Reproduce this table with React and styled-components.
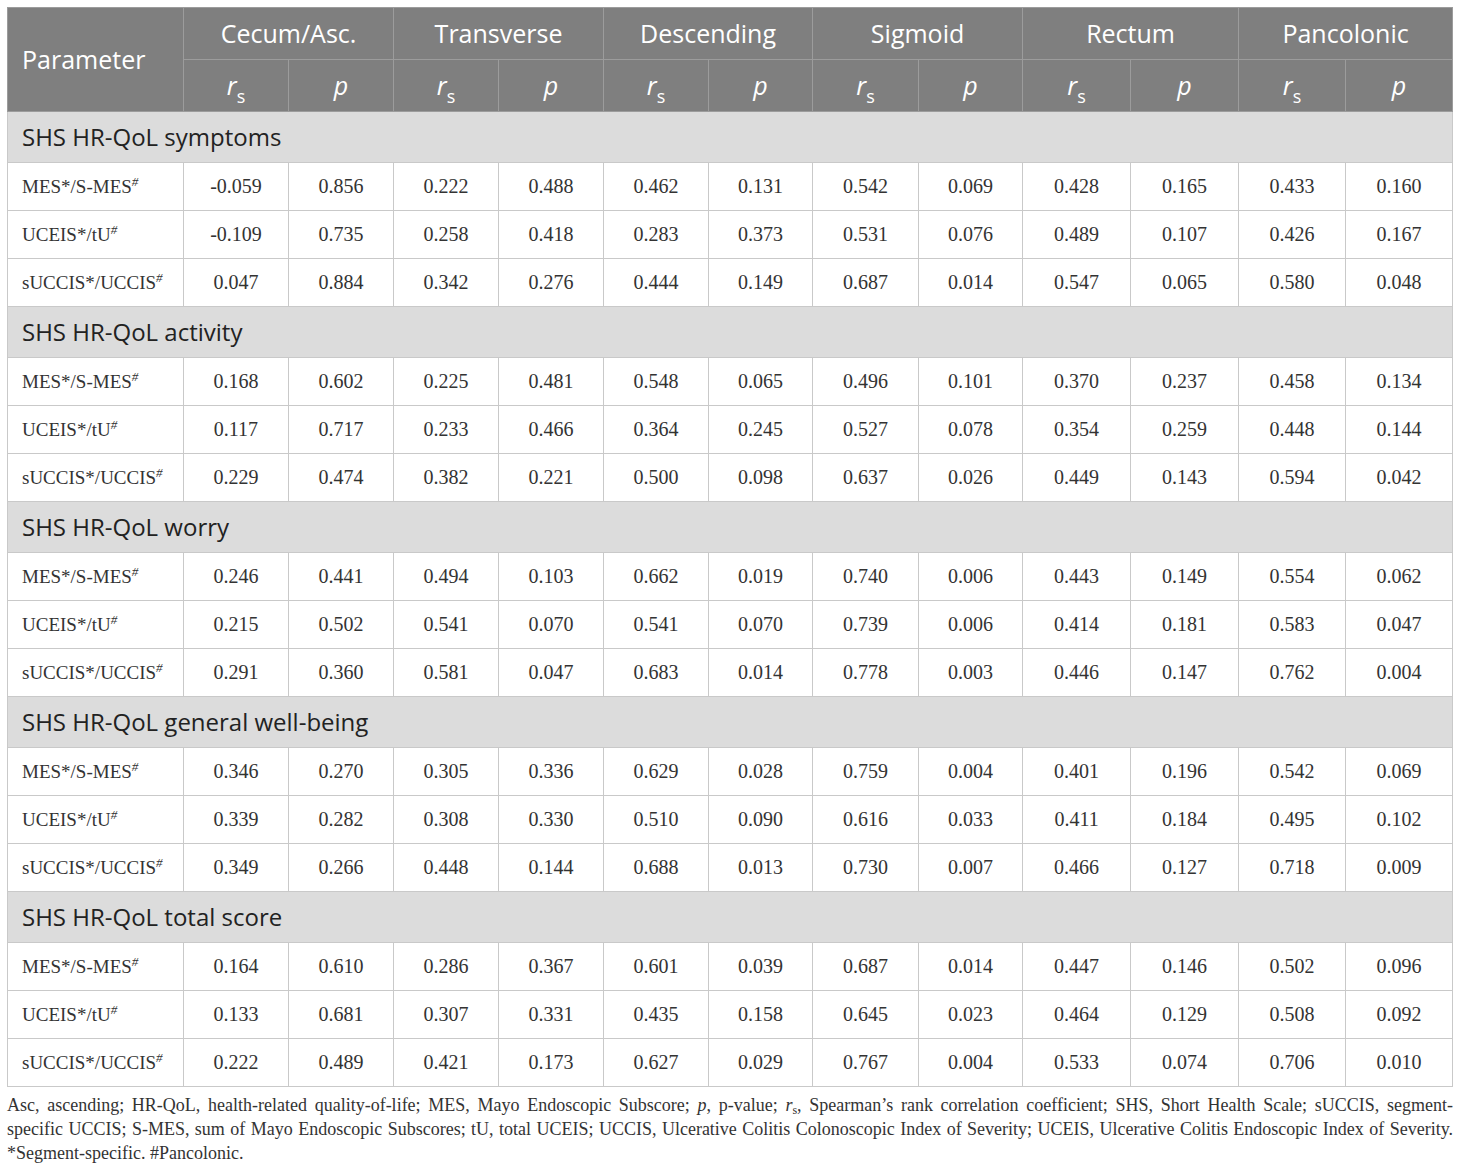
import React from "react";
import styled, { createGlobalStyle } from "styled-components";

const GlobalStyle = createGlobalStyle`
	html, body {
		margin: 0;
		padding: 0;
		background: #fff;
	}
`;

const columns = [
	"Cecum/Asc.",
	"Transverse",
	"Descending",
	"Sigmoid",
	"Rectum",
	"Pancolonic",
];

const widths = [176, 105, 105, 105, 105, 105, 104, 106, 104, 108, 108, 107, 107];

const labels = ["mes", "uceis", "succis"];

const sections = [
	{
		title: "SHS HR-QoL symptoms",
		rows: [
			["-0.059", "0.856", "0.222", "0.488", "0.462", "0.131", "0.542", "0.069", "0.428", "0.165", "0.433", "0.160"],
			["-0.109", "0.735", "0.258", "0.418", "0.283", "0.373", "0.531", "0.076", "0.489", "0.107", "0.426", "0.167"],
			["0.047", "0.884", "0.342", "0.276", "0.444", "0.149", "0.687", "0.014", "0.547", "0.065", "0.580", "0.048"],
		],
	},
	{
		title: "SHS HR-QoL activity",
		rows: [
			["0.168", "0.602", "0.225", "0.481", "0.548", "0.065", "0.496", "0.101", "0.370", "0.237", "0.458", "0.134"],
			["0.117", "0.717", "0.233", "0.466", "0.364", "0.245", "0.527", "0.078", "0.354", "0.259", "0.448", "0.144"],
			["0.229", "0.474", "0.382", "0.221", "0.500", "0.098", "0.637", "0.026", "0.449", "0.143", "0.594", "0.042"],
		],
	},
	{
		title: "SHS HR-QoL worry",
		rows: [
			["0.246", "0.441", "0.494", "0.103", "0.662", "0.019", "0.740", "0.006", "0.443", "0.149", "0.554", "0.062"],
			["0.215", "0.502", "0.541", "0.070", "0.541", "0.070", "0.739", "0.006", "0.414", "0.181", "0.583", "0.047"],
			["0.291", "0.360", "0.581", "0.047", "0.683", "0.014", "0.778", "0.003", "0.446", "0.147", "0.762", "0.004"],
		],
	},
	{
		title: "SHS HR-QoL general well-being",
		rows: [
			["0.346", "0.270", "0.305", "0.336", "0.629", "0.028", "0.759", "0.004", "0.401", "0.196", "0.542", "0.069"],
			["0.339", "0.282", "0.308", "0.330", "0.510", "0.090", "0.616", "0.033", "0.411", "0.184", "0.495", "0.102"],
			["0.349", "0.266", "0.448", "0.144", "0.688", "0.013", "0.730", "0.007", "0.466", "0.127", "0.718", "0.009"],
		],
	},
	{
		title: "SHS HR-QoL total score",
		rows: [
			["0.164", "0.610", "0.286", "0.367", "0.601", "0.039", "0.687", "0.014", "0.447", "0.146", "0.502", "0.096"],
			["0.133", "0.681", "0.307", "0.331", "0.435", "0.158", "0.645", "0.023", "0.464", "0.129", "0.508", "0.092"],
			["0.222", "0.489", "0.421", "0.173", "0.627", "0.029", "0.767", "0.004", "0.533", "0.074", "0.706", "0.010"],
		],
	},
];

function RowLabel({ kind }) {
	if (kind === "mes")
		return (
			<>
				MES*/S-MES<Sup>#</Sup>
			</>
		);
	if (kind === "uceis")
		return (
			<>
				UCEIS*/tU<Sup>#</Sup>
			</>
		);
	return (
		<>
			sUCCIS*/UCCIS<Sup>#</Sup>
		</>
	);
}

export default function App() {
	return (
		<Page>
			<GlobalStyle />
			<Table>
				<colgroup>
					{widths.map((w, i) => (
						<col key={i} style={{ width: w }} />
					))}
				</colgroup>
				<thead>
					<HeadRow>
						<HeadCell rowSpan={2} $left>
							Parameter
						</HeadCell>
						{columns.map((c) => (
							<HeadCell key={c} colSpan={2}>
								{c}
							</HeadCell>
						))}
					</HeadRow>
					<HeadRow>
						{columns.map((c) => (
							<React.Fragment key={c}>
								<HeadCell>
									<Italic>r</Italic>
									<Sub>s</Sub>
								</HeadCell>
								<HeadCell>
									<Italic>p</Italic>
								</HeadCell>
							</React.Fragment>
						))}
					</HeadRow>
				</thead>
				<tbody>
					{sections.map((s) => (
						<React.Fragment key={s.title}>
							<SectionRow>
								<SectionCell colSpan={13}>{s.title}</SectionCell>
							</SectionRow>
							{s.rows.map((r, i) => (
								<DataRow key={i}>
									<LabelCell>
										<RowLabel kind={labels[i]} />
									</LabelCell>
									{r.map((v, j) => (
										<ValueCell key={j}>{v}</ValueCell>
									))}
								</DataRow>
							))}
						</React.Fragment>
					))}
				</tbody>
			</Table>
			<Footnote>
				<FootLine $justify>
					Asc, ascending; HR-QoL, health-related quality-of-life; MES, Mayo Endoscopic Subscore; <i>p</i>, p-value;{" "}
					<i>r</i>
					<FootSub>s</FootSub>, Spearman’s rank correlation coefficient; SHS, Short Health Scale; sUCCIS, segment-
				</FootLine>
				<FootLine $justify>
					specific UCCIS; S-MES, sum of Mayo Endoscopic Subscores; tU, total UCEIS; UCCIS, Ulcerative Colitis
					Colonoscopic Index of Severity; UCEIS, Ulcerative Colitis Endoscopic Index of Severity.
				</FootLine>
				<FootLine>*Segment-specific. #Pancolonic.</FootLine>
			</Footnote>
		</Page>
	);
}

const Page = styled.div`
	padding: 7px 7px 0 7px;
	width: 1446px;
`;

const Table = styled.table`
	width: 1446px;
	table-layout: fixed;
	border-collapse: collapse;
	border: 1px solid #c9c9c9;
`;

const HeadRow = styled.tr`
	height: 52px;
	background: #7f7f7f;
`;

const HeadCell = styled.th`
	border: 1px solid #9c9c9c;
	color: #fff;
	font-family: "Open Sans", "Noto Sans", sans-serif;
	font-weight: 400;
	font-size: 25px;
	text-align: ${(p) => (p.$left ? "left" : "center")};
	padding: ${(p) => (p.$left ? "0 0 0 14px" : "0")};
	vertical-align: middle;
	line-height: 1;
`;

const Italic = styled.span`
	font-style: italic;
`;

const Sub = styled.sub`
	font-size: 18px;
	vertical-align: -8px;
	line-height: 0;
`;

const SectionRow = styled.tr`
	height: 51px;
	background: #dcdcdc;
`;

const SectionCell = styled.td`
	border: 1px solid #c9c9c9;
	padding: 0 0 2px 14px;
	font-family: "Open Sans", "Noto Sans", sans-serif;
	font-size: 24px;
	color: #222;
	vertical-align: middle;
`;

const DataRow = styled.tr`
	height: 48px;
	background: #fff;
`;

const LabelCell = styled.td`
	border: 1px solid #c9c9c9;
	padding: 0 0 0 14px;
	font-family: "Liberation Serif", "Times New Roman", serif;
	font-size: 19px;
	color: #333;
	white-space: nowrap;
	vertical-align: middle;
`;

const Sup = styled.sup`
	font-size: 13px;
	vertical-align: 7px;
	line-height: 0;
	font-style: italic;
`;

const ValueCell = styled.td`
	border: 1px solid #c9c9c9;
	text-align: center;
	font-family: "Liberation Serif", "Times New Roman", serif;
	font-size: 20px;
	color: #333;
	vertical-align: middle;
`;

const Footnote = styled.div`
	margin-top: 6px;
	font-family: "Liberation Serif", "Times New Roman", serif;
	font-size: 18px;
	line-height: 24px;
	color: #333;
`;

const FootLine = styled.div`
	text-align: ${(p) => (p.$justify ? "justify" : "left")};
	text-align-last: ${(p) => (p.$justify ? "justify" : "left")};
	white-space: nowrap;
`;

const FootSub = styled.sub`
	font-size: 12px;
	vertical-align: -3px;
	line-height: 0;
`;
